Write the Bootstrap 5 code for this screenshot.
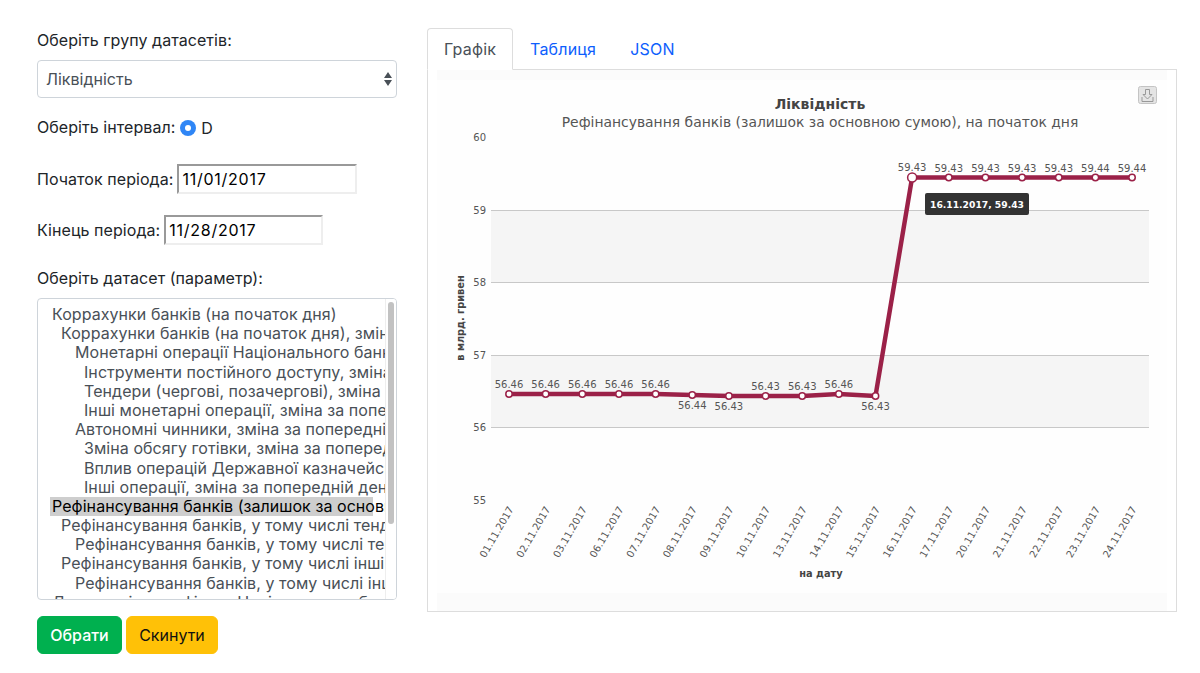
<!DOCTYPE html>
<html lang="uk">
<head>
    <meta charset="UTF-8">
    <title>Ліквідність</title>
    <link href="https://cdn.jsdelivr.net/npm/bootstrap@5.3.0/dist/css/bootstrap.min.css" rel="stylesheet">
    <style>
        body {
            font-family: Inter, "Noto Sans", sans-serif;
            font-size: 16px;
            letter-spacing: .06px;
            color: #212529;
            background: #fff;
        }
        .page-wrap { padding: 28px 23px 0 37px; }
        .side-col { width: 360px; flex: none; }
        .chart-col { margin-left: 30px; flex: 1 1 auto; min-width: 0; }
        .field-label { display: block; height: 24px; line-height: 24px; margin-bottom: 8px; }
        .form-select {
            height: 38px; border-color: #ced4da; color: #495057; font-size: 16px; padding-left: 8px; margin-bottom: 17px; border-radius: 4px;
            background-image: url("data:image/svg+xml,%3Csvg xmlns='http://www.w3.org/2000/svg' viewBox='0 0 8 14'%3E%3Cpath fill='%23495057' d='M4 0l4 6H0zM4 14l4-6H0z'/%3E%3C/svg%3E");
            background-size: 8px 14px;
            background-position: right 4px center;
        }
        .radio-row { display: flex; align-items: center; height: 24px; margin-bottom: 25px; }
        .radio-dot { width: 16px; height: 16px; border-radius: 50%; background: #2f86f6; display: inline-flex; align-items: center; justify-content: center; margin: 2px 5px 0 5px; }
        .radio-dot::after { content: ""; width: 6px; height: 6px; border-radius: 50%; background: #fff; }
        .radio-val { margin-top: 2px; }
        .date-row { display: flex; align-items: center; height: 30px; margin-bottom: 21px; }
        .date-box { border: 2px solid; border-color: #999 #eee #eee #999; height: 30px; padding: 1px 3px; color: #000; font: inherit; letter-spacing: .75px; outline: none; margin-left: 4px; }
        .date-a { width: 180px; }
        .date-b { width: 159px; }
        .param-box { position: relative; height: 302px; border: 1px solid #ced4da; border-radius: 4px; overflow: hidden; padding-top: 6px; margin-bottom: 16px; color: #495057; }
        .param-item { height: 19.2px; line-height: 19.2px; white-space: nowrap; overflow: hidden; width: 336px; margin-left: 12px; padding-left: 2px; }
        .param-item.lv1 { padding-left: 11px; }
        .param-item.lv2 { padding-left: 25px; }
        .param-item.lv3 { padding-left: 34px; }
        .param-item.picked { color: #000; background: linear-gradient(to right, #cecece 323px, #fff 323px); }
        .param-track { position: absolute; top: 0; right: 0; bottom: 0; width: 11px; background: #fff; border-left: 1px solid #eee; }
        .param-thumb { position: absolute; top: 3px; left: 2px; width: 6px; height: 222px; border-radius: 3px; background: #c2c2c2; }
        .btn-pick { background: #00b04f; border-color: #00b04f; color: #fff; font-weight: 500; height: 38px; width: 85px; padding: 0; }
        .btn-clear { background: #ffc107; border-color: #ffc107; color: #111; height: 38px; width: 92px; padding: 0; }
        .nav-tabs { border-color: #ddd; }
        .nav-tabs .nav-link { color: #0d5efd; height: 42px; padding: 8px 16px; line-height: 24px; border-radius: 4px 4px 0 0; letter-spacing: .2px; }
        .nav-tabs .nav-link.active { color: #495057; border-color: #ddd #ddd #fff; }
        .chart-panel { border: 1px solid #ddd; border-top: 0; height: 542px; }
        .chart-panel svg { display: block; }
        .chart-panel text { font-family: "DejaVu Sans", Verdana, sans-serif; letter-spacing: 0; }
    </style>
</head>
<body>
    <div class="page-wrap d-flex">
        <div class="side-col">
            <label class="field-label">Оберіть групу датасетів:</label>
            <select class="form-select"><option>Ліквідність</option></select>
            <div class="radio-row">Оберіть інтервал:<span class="radio-dot"></span><span class="radio-val">D</span></div>
            <div class="date-row">Початок періода:<input class="date-box date-a" value="11/01/2017"></div>
            <div class="date-row">Кінець періода:<input class="date-box date-b" value="11/28/2017"></div>
            <label class="field-label">Оберіть датасет (параметр):</label>
            <div class="param-box">
                <div class="param-item">Коррахунки банків (на початок дня)</div>
                <div class="param-item lv1">Коррахунки банків (на початок дня), зміна за попередній день</div>
                <div class="param-item lv2">Монетарні операції Національного банку, зміна за попередній день</div>
                <div class="param-item lv3">Інструменти постійного доступу, зміна за попередній день</div>
                <div class="param-item lv3">Тендери (чергові, позачергові), зміна за попередній день</div>
                <div class="param-item lv3">Інші монетарні операції, зміна за попередній день</div>
                <div class="param-item lv2">Автономні чинники, зміна за попередній день</div>
                <div class="param-item lv3">Зміна обсягу готівки, зміна за попередній день</div>
                <div class="param-item lv3">Вплив операцій Державної казначейської служби</div>
                <div class="param-item lv3">Інші операції, зміна за попередній день</div>
                <div class="param-item picked">Рефінансування банків (залишок за основною сумою), на початок дня</div>
                <div class="param-item lv1">Рефінансування банків, у тому числі тендери</div>
                <div class="param-item lv2">Рефінансування банків, у тому числі тендери овернайт</div>
                <div class="param-item lv1">Рефінансування банків, у тому числі інші</div>
                <div class="param-item lv2">Рефінансування банків, у тому числі інші овернайт</div>
                <div class="param-item">Депозитні сертифікати Національного банку</div>
                <div class="param-track"><div class="param-thumb"></div></div>
            </div>
            <div class="d-flex gap-1">
                <button type="button" class="btn btn-pick">Обрати</button>
                <button type="button" class="btn btn-clear">Скинути</button>
            </div>
        </div>
        <div class="chart-col">
            <ul class="nav nav-tabs">
                <li class="nav-item"><a class="nav-link active" href="#">Графік</a></li>
                <li class="nav-item"><a class="nav-link" href="#">Таблиця</a></li>
                <li class="nav-item"><a class="nav-link" href="#">JSON</a></li>
            </ul>
            <div class="chart-panel">
                <svg id="chart" width="748" height="541" viewBox="428 70 748 541" xmlns="http://www.w3.org/2000/svg"></svg>
            </div>
        </div>
    </div>

    <script>
    // Chart data: label, value, y of point, y of value label
    const dates = ['01.11.2017','02.11.2017','03.11.2017','06.11.2017','07.11.2017','08.11.2017','09.11.2017','10.11.2017','13.11.2017','14.11.2017','15.11.2017','16.11.2017','17.11.2017','20.11.2017','21.11.2017','22.11.2017','23.11.2017','24.11.2017'];
    const values = [56.46,56.46,56.46,56.46,56.46,56.44,56.43,56.43,56.43,56.46,56.43,59.43,59.43,59.43,59.43,59.43,59.44,59.44];
    const pointY = [394,394,394,394,394,395,396,396,396,394,396,177.5,177.5,177.5,177.5,177.5,177.5,177.5];
    const labelY = [388,388,388,388,388,409,410,390,390,388,410,171,172,172,172,172,172,172];
    const startX = 509, stepX = 36.65;
    let s = '';
    s += '<rect x="437" y="70" width="730" height="541" fill="#fbfbfb"/>';
    s += '<rect x="437" y="80" width="730" height="513" fill="#fefefe"/>';
    s += '<rect x="491" y="210" width="658" height="72" fill="#f5f5f5"/>';
    s += '<rect x="491" y="355" width="658" height="72" fill="#f5f5f5"/>';
    [[60,137],[59,210],[58,282],[57,355],[56,427],[55,500]].forEach(([v, y]) => {
        if (v < 60 && v > 55) s += `<line x1="491" x2="1149" y1="${y + .5}" y2="${y + .5}" stroke="#c8c8c8"/>`;
        s += `<text x="486" y="${y + 4}" font-size="10" fill="#555" text-anchor="end">${v}</text>`;
    });
    s += '<text x="820" y="108.500" font-size="14" font-weight="bold" fill="#444" text-anchor="middle">Ліквідність</text>';
    s += '<text x="820" y="127" font-size="13.900" fill="#555" text-anchor="middle">Рефінансування банків (залишок за основною сумою), на початок дня</text>';
    s += '<text transform="translate(464,318) rotate(-90)" font-size="9.800" font-weight="bold" fill="#444" text-anchor="middle">в млрд. гривен</text>';
    s += '<text x="821" y="577" font-size="9.800" font-weight="bold" fill="#444" text-anchor="middle">на дату</text>';
    const pts = values.map((v, i) => (startX + i * stepX).toFixed(1) + ',' + pointY[i]).join(' ');
    s += `<polyline points="${pts}" fill="none" stroke="#9b2148" stroke-width="4.500" stroke-linejoin="round"/>`;
    values.forEach((v, i) => {
        const x = startX + i * stepX;
        s += `<circle cx="${x}" cy="${pointY[i]}" r="${i === 11 ? 4.5 : 3.2}" fill="#fff" stroke="#9b2148" stroke-width="1.5"/>`;
        s += `<text x="${x}" y="${labelY[i]}" font-size="10" fill="#555" text-anchor="middle">${v.toFixed(2)}</text>`;
        s += `<text transform="translate(${x + 5},509) rotate(-60)" font-size="10" fill="#555" text-anchor="end">${dates[i]}</text>`;
    });
    s += '<rect x="925" y="193" width="104" height="22" rx="2" fill="#333"/>';
    s += '<text x="977" y="207.500" font-size="9.200" font-weight="bold" fill="#fff" text-anchor="middle">16.11.2017, 59.43</text>';
    // export button
    s += '<rect x="1138.5" y="86.500" width="18" height="17" rx="2" fill="#e4e4e4" stroke="#c4c4c4"/>';
    s += '<path d="M1145.500 89.500h4v5h2.500l-4.500 4.500-4.500-4.500h2.500zM1142 97v4.500h11V97" fill="none" stroke="#999"/>';
    document.getElementById('chart').innerHTML = s;
    </script>
    <script src="https://cdn.jsdelivr.net/npm/bootstrap@5.3.0/dist/js/bootstrap.bundle.min.js"></script>
</body>
</html>
